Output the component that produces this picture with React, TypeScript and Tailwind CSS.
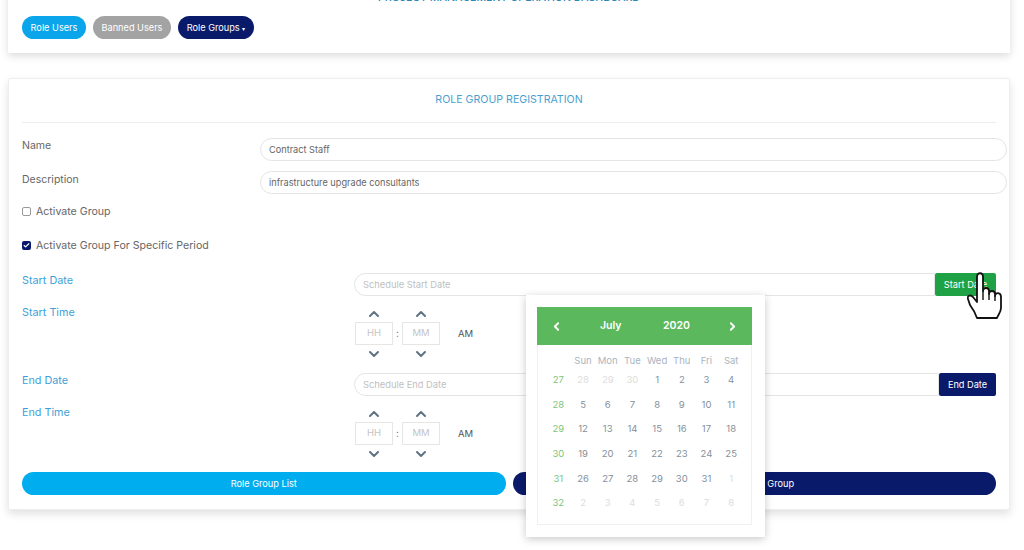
import { ChevronDown, ChevronLeft, ChevronRight, ChevronUp, Check } from "lucide-react";

const WEEKDAYS = ["Sun", "Mon", "Tue", "Wed", "Thu", "Fri", "Sat"];

const CALENDAR_ROWS = [
  { week: 27, days: [[28, 1], [29, 1], [30, 1], [1, 0], [2, 0], [3, 0], [4, 0]] },
  { week: 28, days: [[5, 0], [6, 0], [7, 0], [8, 0], [9, 0], [10, 0], [11, 0]] },
  { week: 29, days: [[12, 0], [13, 0], [14, 0], [15, 0], [16, 0], [17, 0], [18, 0]] },
  { week: 30, days: [[19, 0], [20, 0], [21, 0], [22, 0], [23, 0], [24, 0], [25, 0]] },
  { week: 31, days: [[26, 0], [27, 0], [28, 0], [29, 0], [30, 0], [31, 0], [1, 1]] },
  { week: 32, days: [[2, 1], [3, 1], [4, 1], [5, 1], [6, 1], [7, 1], [8, 1]] },
];

function TimeField({ label }: { label: string }) {
  return (
    <div className="flex w-[38px] flex-col items-center">
      <ChevronUp size={16} strokeWidth={3} className="text-[#5f7383]" />
      <div className="flex h-[23px] w-[38px] items-center justify-center border border-[#e6e6e6] text-[9.5px] text-[#c4c4c4]">
        {label}
      </div>
      <ChevronDown size={16} strokeWidth={3} className="mt-[1px] text-[#5f7383]" />
    </div>
  );
}

function TimePicker() {
  return (
    <div className="flex items-start">
      <TimeField label="HH" />
      <span className="mt-[20px] w-[9px] text-center text-[10px] text-[#777]">:</span>
      <TimeField label="MM" />
      <span className="ml-[18px] mt-[21px] text-[9.5px] text-[#555]">AM</span>
    </div>
  );
}

function Calendar() {
  return (
    <div className="absolute left-[526px] top-[295px] z-10 h-[242px] w-[239px] bg-white pl-[11px] pr-[13px] pt-[12px] shadow-[0_2px_8px_rgba(0,0,0,0.22)]">
      <div className="h-[218px] border border-[#f0f0f0]">
        <div className="-mx-px -mt-px flex h-[38px] items-center bg-[#5cb85c] text-[10.5px] font-semibold text-white">
          <ChevronLeft size={13} strokeWidth={3.5} className="ml-[13px]" />
          <span className="ml-[37px] w-[63px]">July</span>
          <span>2020</span>
          <ChevronRight size={13} strokeWidth={3.5} className="ml-auto mr-[13px]" />
        </div>
        <div className="grid grid-cols-[repeat(8,24.7px)] pl-[8px] pt-[8px] text-center text-[9.5px]">
          <span className="h-[15px]" />
          {WEEKDAYS.map((day) => (
            <span key={day} className="h-[15px] leading-[15px] text-[#aab4c0]">
              {day}
            </span>
          ))}
          {CALENDAR_ROWS.map((row) => (
            <div key={row.week} className="contents">
              <span className="h-[24.7px] leading-[24.7px] text-[#7dc67d]">{row.week}</span>
              {row.days.map(([day, muted], index) => (
                <span
                  key={index}
                  className={`h-[24.7px] leading-[24.7px] ${muted ? "text-[#dcdcdc]" : "text-[#858f9b]"}`}
                >
                  {day}
                </span>
              ))}
            </div>
          ))}
        </div>
      </div>
    </div>
  );
}

function HandCursor() {
  return (
    <svg
      className="absolute left-[967px] top-[272px] z-20"
      width="36"
      height="47"
      viewBox="0 0 36 47"
      fill="#fff"
      stroke="#111"
      strokeWidth="1.8"
      strokeLinejoin="round"
    >
      <path d="M10 46 C8 40 6 37 3 33 L1 27 C0 24 3 22 6 25 L10 30 L10 5 C10 0 16 0 16 5 L16 19 C16 15 22 15 22 19 L22 22 C22 18 28 18 28 22 L28 24 C28 20 34 20 34 25 L34 36 C34 40 31 43 30 46 Z" />
      <path d="M16 19 V28 M22 22 V28 M28 24 V29" fill="none" strokeWidth="1.4" />
    </svg>
  );
}

export default function App() {
  return (
    <div className="relative h-[550px] w-[1024px] overflow-hidden bg-white font-['Inter',sans-serif]">
      {/* TOP CARD */}
      <div className="mx-[8px] -mt-[10px] h-[63px] w-[1002px] bg-white shadow-[0_3px_8px_rgba(0,0,0,0.14)]">
        <div className="h-[26px] text-center text-[10.6px] font-medium uppercase leading-[15px] text-[#2e86b5]">
          Project Management Operation Dashboard
        </div>
        <div className="flex gap-[7px] pl-[14px] text-[9.2px]">
          <button className="h-[23px] w-[64px] rounded-full bg-[#0aa5ea] text-white">Role Users</button>
          <button className="h-[23px] w-[78px] rounded-full bg-[#a3a3a3] text-white">Banned Users</button>
          <button className="h-[23px] w-[76px] rounded-full bg-[#0a1a6b] text-white">
            Role Groups <span className="text-[6px]">▾</span>
          </button>
        </div>
      </div>

      {/* REGISTRATION CARD */}
      <div className="ml-[8px] mt-[25px] h-[432px] w-[1002px] rounded-[2px] border border-[#eeeeee] bg-white px-[13px] shadow-[0_4px_8px_rgba(0,0,0,0.12)]">
        <div className="h-[44px] border-b border-[#ececec] text-center text-[10.6px] uppercase leading-[41px] text-[#4a9fd0]">
          Role Group Registration
        </div>

        <div className="mt-[15px] flex h-[23px] text-[10.5px] text-[#666]">
          <span className="w-[238px] shrink-0 leading-[15px]">Name</span>
          <div className="h-[23px] w-[747px] shrink-0 rounded-full border border-[#e4e4e4] pl-[8px] text-[9.2px] leading-[21px] text-[#666]">
            Contract Staff
          </div>
        </div>
        <div className="mt-[10px] flex h-[23px] text-[10.5px] text-[#666]">
          <span className="w-[238px] shrink-0 leading-[17px]">Description</span>
          <div className="h-[23px] w-[747px] shrink-0 rounded-full border border-[#e4e4e4] pl-[8px] text-[9.2px] leading-[21px] text-[#666]">
            infrastructure upgrade consultants
          </div>
        </div>

        <div className="mt-[10px] flex h-[15px] items-center gap-[5px] text-[10.6px] text-[#666]">
          <span className="h-[9px] w-[9px] rounded-[2px] border border-[#999] bg-white" />
          Activate Group
        </div>
        <div className="mt-[19px] flex h-[15px] items-center gap-[5px] text-[10.6px] text-[#666]">
          <span className="flex h-[9px] w-[9px] items-center justify-center rounded-[2px] bg-[#0a1a6b]">
            <Check size={7} strokeWidth={4} className="text-white" />
          </span>
          Activate Group For Specific Period
        </div>

        <div className="mt-[20px] flex h-[23px] text-[10.8px] text-[#3f9fd6]">
          <span className="w-[332px] shrink-0 leading-[15px]">Start Date</span>
          <div className="h-[23px] w-[582px] rounded-l-full border border-[#e4e4e4] pl-[8px] text-[9.3px] leading-[21px] text-[#c0c0c0]">
            Schedule Start Date
          </div>
          <button className="h-[23px] w-[61px] rounded-[2px] bg-[#1fa246] text-[9.2px] text-white">Start Date</button>
        </div>

        <div className="mt-[10px] flex h-[52px] text-[10.8px] text-[#3f9fd6]">
          <span className="w-[333px] shrink-0 leading-[13px]">Start Time</span>
          <TimePicker />
        </div>

        <div className="mt-[15px] flex h-[23px] text-[10.8px] text-[#3f9fd6]">
          <span className="w-[332px] shrink-0 leading-[15px]">End Date</span>
          <div className="h-[23px] w-[586px] rounded-l-full border border-[#e4e4e4] pl-[8px] text-[9.3px] leading-[21px] text-[#c0c0c0]">
            Schedule End Date
          </div>
          <button className="h-[23px] w-[57px] rounded-[2px] bg-[#0a1a6b] text-[9.2px] text-white">End Date</button>
        </div>

        <div className="mt-[10px] flex h-[52px] text-[10.8px] text-[#3f9fd6]">
          <span className="w-[333px] shrink-0 leading-[13px]">End Time</span>
          <TimePicker />
        </div>

        <div className="mt-[14px] flex gap-[7px] text-[9.2px] text-white">
          <button className="h-[23px] w-[484px] rounded-full bg-[#00aeef]">Role Group List</button>
          <button className="h-[23px] w-[484px] rounded-full bg-[#0a1a6b]">Create Role Group</button>
        </div>
      </div>

      <Calendar />
      <HandCursor />
    </div>
  );
}
